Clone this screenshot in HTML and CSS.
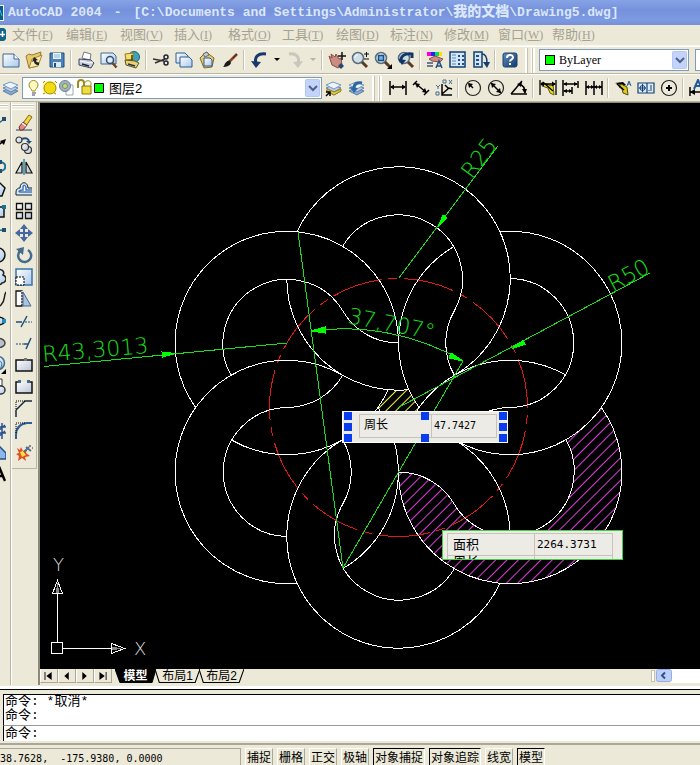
FILE: index.html
```html
<!DOCTYPE html>
<html lang="zh-CN">
<head>
<meta charset="utf-8">
<title>AutoCAD 2004 - Drawing5.dwg</title>
<link rel="stylesheet" href="styles.css">
</head>
<body>
<svg width="0" height="0" class="defs" aria-hidden="true">
  <defs>
    <linearGradient id="paper" x1="0" y1="0" x2="1" y2="1"><stop offset="0" stop-color="#ffffff"/><stop offset="1" stop-color="#a9c8ec"/></linearGradient>
    <linearGradient id="steel" x1="0" y1="0" x2="1" y2="1"><stop offset="0" stop-color="#ffffff"/><stop offset="1" stop-color="#b9c3d6"/></linearGradient>
    <linearGradient id="help" x1="0" y1="0" x2="1" y2="1"><stop offset="0" stop-color="#5f8fbe"/><stop offset="1" stop-color="#12386e"/></linearGradient>
    <g id="lens"><circle cx="7" cy="7" r="5.5" fill="#cfdfe8" stroke="#5a6d7c" stroke-width="1.5"/><path d="M3.8 7a3.3 3.3 0 0 1 3-3.2" fill="none" stroke="#fff"/><path d="M11 11l5 5" stroke="#5b3b24" stroke-width="3"/></g>
    <g id="stack"><path d="M1 12l7-3 8 3-7 4z" fill="#8aa9cc" stroke="#5d7fa8"/><path d="M1 9l7-3 8 3-7 4z" fill="#b9cfe6" stroke="#6486ae"/><path d="M1 6l7-3 8 3-7 4z" fill="#edf4fb" stroke="#7797bd"/></g>
    <g id="dims"><path d="M1 2v14M17 2v14M2 8h14" fill="none" stroke="#000" stroke-width="1.5"/><path d="M1 8l4-2.500v5zM17 8l-4-2.500v5z"/></g>
  </defs>
</svg>

<header class="title">
  <svg class="app-icon" width="4" height="16" viewBox="0 0 4 16"><path fill="#0d5c84" d="M0 0h3v16H0z"/><path stroke="#e9f8ff" d="M3.500 0v16M0 .5h4M0 15.500h4"/><path stroke="#31c1dd" d="M0 5l2 6"/></svg>
  <span>AutoCAD 2004</span><span>-</span><span>[C:\Documents and Settings\Administrator\<b class="cn">我的文档</b>\Drawing5.dwg]</span>
</header>

<nav class="menu">
  <svg class="doc-icon" width="6" height="16" viewBox="0 0 6 16"><path fill="#12658a" d="M0 1h4l2 2v9l-2 2H0z"/><path stroke="#fff" stroke-width="1.500" d="M0 7.500h5M2.500 4v6"/></svg>
  <a href="#">文件<i>(<u>F</u>)</i></a><a href="#">编辑<i>(<u>E</u>)</i></a><a href="#">视图<i>(<u>V</u>)</i></a><a href="#">插入<i>(<u>I</u>)</i></a><a href="#">格式<i>(<u>O</u>)</i></a><a href="#">工具<i>(<u>T</u>)</i></a><a href="#">绘图<i>(<u>D</u>)</i></a><a href="#">标注<i>(<u>N</u>)</i></a><a href="#">修改<i>(<u>M</u>)</i></a><a href="#">窗口<i>(<u>W</u>)</i></a><a href="#">帮助<i>(<u>H</u>)</i></a>
</nav>

<div class="bar">
  <button aria-label="新建"><svg viewBox="0 0 18 18"><path d="M1 3h11l5 5v8H1z" fill="url(#paper)" stroke="#3c6791"/><path d="M12 3v5h5" fill="#fff" stroke="#3c6791"/></svg></button>
  <button aria-label="打开"><svg viewBox="0 0 18 18"><path d="M1 5l3-2 3 1 9-3-3 14-9 2z" fill="#e8c96a" stroke="#9a7a2c"/><path d="M4 17l3-9 10-4-4 11z" fill="#f8ebb0" stroke="#a88732"/><path d="M14 14c-4 0-5-2-5-4l-2 1 2-5 4 3-2 .5c0 1 1 2 3 2z" fill="#222"/></svg></button>
  <button aria-label="保存"><svg viewBox="0 0 18 18"><path d="M2 2h14v14H2z" fill="#4d84b8" stroke="#1d4f80"/><path d="M5 2h8v6H5z" fill="#e9f3fb"/><path d="M6 4h6M6 6h6" stroke="#8fb2d2"/><path d="M5 11h8v5H5z" fill="#dce9f5"/><path d="M6 12h2v4H6z" fill="#1d4f80"/></svg></button>
  <span class="sep"></span>
  <button aria-label="打印"><svg viewBox="0 0 18 18"><path d="M5 7l2-6 7 2-1 6z" fill="#fff" stroke="#778"/><path d="M2 8l12 1 3 3-3 5-12-3z" fill="#c8d0de" stroke="#3a4560"/><path d="M3 10l10 2 3-1" fill="none" stroke="#fff"/><path d="M5 13l7 2" stroke="#223" stroke-width="1.500"/></svg></button>
  <button aria-label="预览"><svg viewBox="0 0 18 18"><path d="M1 2h12l3 3v8H1z" fill="url(#paper)" stroke="#47688c"/><circle cx="10" cy="9" r="3.500" fill="#dfeefa" stroke="#33506f" stroke-width="1.500"/><path d="M12.500 12l4 4.500" stroke="#6b4427" stroke-width="2.500"/></svg></button>
  <button aria-label="发布"><svg viewBox="0 0 18 18"><circle cx="11" cy="6" r="5.500" fill="#3da3bd" stroke="#1c6178"/><path d="M2 3l8-1 1 6-8 1z" fill="#f6e06a" stroke="#967a15"/><path d="M2 9l10 1 4 2-3 5-10-3z" fill="#e9d36a" stroke="#5d552e"/><path d="M5 13l7 2M9 4v5" stroke="#24344d" stroke-width="1.500"/></svg></button>
  <span class="sep"></span>
  <button aria-label="剪切"><svg viewBox="0 0 18 18"><path d="M1 8l11 2M3 12l10-4" stroke="#333" stroke-width="1.500"/><circle cx="14" cy="6" r="2" fill="none" stroke="#223" stroke-width="1.500"/><circle cx="14" cy="12" r="2" fill="none" stroke="#223" stroke-width="1.500"/></svg></button>
  <button aria-label="复制"><svg viewBox="0 0 18 18"><path d="M1 2h9l3 3v7H1z" fill="url(#paper)" stroke="#2c5d8f"/><path d="M5 6h9l3 3v7H5z" fill="url(#paper)" stroke="#2c5d8f"/></svg></button>
  <button aria-label="粘贴"><svg viewBox="0 0 18 18"><path d="M2 7l6-6 8 6-2 9-8 1z" fill="#e4c970" stroke="#86691e"/><path d="M5 3l4-2 2 3-4 2z" fill="#c9ccd4" stroke="#667"/><path d="M6 7h6l2 2v6H6z" fill="url(#paper)" stroke="#2c5d8f"/></svg></button>
  <button aria-label="特性匹配"><svg viewBox="0 0 18 18"><path d="M16 3l-8 8" stroke="#87401f" stroke-width="2.500"/><path d="M16 3l-4 4" stroke="#333"/><path d="M9 10c-2-1-5 1-6 5l-1 1c3 0 7-1 8-4z" fill="#1b1b1b"/></svg></button>
  <span class="sep"></span>
  <button aria-label="放弃"><svg viewBox="0 0 18 18"><path d="M6 12C4 6 8 2 16 3" fill="none" stroke="#17386a" stroke-width="3"/><path d="M1 10l10 1-5 6z" fill="#17386a"/></svg></button>
  <button class="drop" aria-label="放弃列表"><svg viewBox="0 0 9 18"><path d="M2 7h6l-3 3z"/></svg></button>
  <button aria-label="重做"><svg viewBox="0 0 18 18"><path d="M12 12C14 6 10 2 3 3" fill="none" stroke="#c9c7bc" stroke-width="3"/><path d="M17 10l-10 1 5 6z" fill="#c9c7bc"/></svg></button>
  <button class="drop" aria-label="重做列表"><svg viewBox="0 0 9 18"><path fill="#b5b2a3" d="M2 7h6l-3 3z"/></svg></button>
  <span class="sep"></span>
  <button aria-label="实时平移"><svg viewBox="0 0 18 18"><path d="M1 5l3 2-1-4 4 3 1-3 3 5 2-1 1 7-4 3-6-3z" fill="#c98b82" stroke="#8a4a45"/><path d="M10 15l3-3 3 3-3 3z" fill="#27466f"/><path d="M14 1v8M10 5h8" stroke="#111" stroke-width="1.500"/></svg></button>
  <button aria-label="实时缩放"><svg viewBox="0 0 18 18"><use href="#lens"/><path d="M13 3h5M15.500 1v5M13 8h5" stroke="#111"/></svg></button>
  <button aria-label="窗口缩放"><svg viewBox="0 0 18 18"><use href="#lens"/><path d="M4.500 4.500h5v5h-5z" fill="#7cb3df" stroke="#1c4f86" stroke-width="1.500"/><path d="M18 13v5h-5z"/></svg></button>
  <button aria-label="缩放上一个"><svg viewBox="0 0 18 18"><use href="#lens"/><path d="M4 11C3 5 8 2 15 3v4" fill="none" stroke="#123767" stroke-width="3"/><path d="M1 8l8 1-4 5z" fill="#123767"/></svg></button>
  <span class="sep"></span>
  <button aria-label="特性"><svg viewBox="0 0 18 18"><path fill="#f0c" d="M1 1h4v4H1z"/><path fill="#22f" d="M5 1h4v4H5z"/><path fill="#0d6" d="M9 1h4v4H9z"/><path fill="#fd0" d="M13 1h3v4h-3z"/><path d="M3 8l6-3 8 3-3 3-8-1z" fill="#cb8d86" stroke="#8a4a45"/><path d="M1 12h6M1 15h6" stroke="#457" stroke-width="1.500"/><path d="M10 17l3-7 3 7M11 15h4" fill="none" stroke="#234f80" stroke-width="1.500"/></svg></button>
  <button aria-label="设计中心"><svg viewBox="0 0 18 18"><path d="M1 1h15v15H1z" fill="#d6e8f7" stroke="#123e73" stroke-width="1.500"/><path d="M3 4h4M3 7h4M3 10h4M3 13h4" stroke="#5687b8"/><path d="M9 4h2v2H9zM13 4h2v2h-2zM9 8h2v2H9zM13 8h2v2h-2zM9 12h2v2H9zM13 12h2v2h-2z" fill="#1d4f88"/></svg></button>
  <button aria-label="工具选项板"><svg viewBox="0 0 18 18"><path d="M2 1h8v15H2z" fill="#d6e8f7" stroke="#123e73" stroke-width="1.500"/><path d="M4 4h3v2H4zM4 8h3v2H4zM4 12h3v2H4z" fill="#1d4f88"/><path d="M10 3c4 0 5 3 5 9" fill="none" stroke="#123e73" stroke-width="1.500"/><path d="M11 11l4 6 3-6z" fill="#123e73"/></svg></button>
  <span class="sep"></span>
  <button aria-label="帮助"><svg viewBox="0 0 18 18"><rect x="2" y="2" width="14" height="14" rx="2" fill="url(#help)" stroke="#17416f"/><path d="M6 7c0-4 6-4 6-.500 0 2-3 2-3 4M9 12v2" fill="none" stroke="#fff" stroke-width="2"/></svg></button>
  <span class="grip"></span>
  <label class="combo color"><span class="swatch"></span><select aria-label="颜色"><option>ByLayer</option></select><svg class="arrow" viewBox="0 0 15 18"><rect x=".5" y=".5" width="14" height="17" rx="1" fill="#c3d3fb" stroke="#b4c7f3"/><path d="M4 7l4 4 4-4" fill="none" stroke="#4d6185" stroke-width="2"/></svg></label>
  <span class="combo rest"></span>
</div>

<div class="bar">
  <button aria-label="图层特性"><svg viewBox="0 0 18 18"><use href="#stack"/></svg></button>
  <label class="combo layer">
    <svg class="state" width="76" height="18" viewBox="0 0 76 18"><path d="M4 12c0-2-3-3-3-6a4.500 4.500 0 0 1 9 0c0 3-3 4-3 6z" fill="#fffbc0" stroke="#a08a20"/><path d="M4 14h4M4 16h3" stroke="#445"/><path d="M15 2h13v13H15z" fill="#fff6a0"/><circle cx="22" cy="9" r="6" fill="#f2dc10" stroke="#9c8b19"/><path d="M17 2l-2 2M27 2l2 2M15 15l2-1M28 15l-2-1" stroke="#a58e12"/><path d="M38 6h7v10h-7z" fill="#fff" stroke="#9aa7b3"/><circle cx="37" cy="7" r="5.500" fill="#9fb4c0" stroke="#6c8593"/><circle cx="37" cy="7" r="2.500" fill="#c9d78a" stroke="#7b8d65"/><path d="M50 9V4c0-4 6-4 6 0v3" fill="none" stroke="#9b8d1d" stroke-width="2"/><path d="M54 7h9v8h-9z" fill="#f0dd3c" stroke="#867912"/><path d="M57 4c0-3 6-3 6 0v4" fill="none" stroke="#9b8d1d"/><path d="M66.500 4.500h9v9h-9z" fill="#0f0" stroke="#000"/></svg>
    <select aria-label="图层"><option>图层2</option></select><svg class="arrow" viewBox="0 0 15 18"><rect x=".5" y=".5" width="14" height="17" rx="1" fill="#c3d3fb" stroke="#b4c7f3"/><path d="M4 7l4 4 4-4" fill="none" stroke="#4d6185" stroke-width="2"/></svg></label>
  <button aria-label="置为当前"><svg viewBox="0 0 18 18"><use href="#stack"/><path d="M2 10l7 3 7-3v2l-7 4-7-4z" fill="#e6cb3f" stroke="#9c8420"/><path d="M1 17l3-3M1 13h4v4" fill="none" stroke="#000" stroke-width="1.500"/></svg></button>
  <button aria-label="上一个图层"><svg viewBox="0 0 18 18"><use href="#stack"/><path d="M6 9c0-4 3-6 8-5" fill="none" stroke="#2b67a5" stroke-width="3"/><path d="M2 8l8 1-4 5z" fill="#2b67a5"/></svg></button>
  <span class="grip"></span>
  <button aria-label="线性标注"><svg viewBox="0 0 18 18"><use href="#dims"/></svg></button>
  <button aria-label="对齐标注"><svg viewBox="0 0 18 18"><path d="M1 6l4-4M12 16l5-5M3 4l12 10" stroke="#000" stroke-width="1.500"/><path d="M3 4l5 1-3 4zM15 14l-5-1 3-4z"/></svg></button>
  <button aria-label="坐标标注"><svg viewBox="0 0 18 18"><path d="M7 5v11h10M7 15l7-6 3 1M10 6l3 3" fill="none" stroke="#000" stroke-width="1.500"/><path d="M1 6l2 2 2-2M3 8v2M8 1h3v3H8zM14 1l3 4M17 1l-3 4M1 13h3v3H1z" fill="none" stroke="#476d8c"/></svg></button>
  <span class="sep"></span>
  <button aria-label="半径标注"><svg viewBox="0 0 18 18"><circle cx="9" cy="9" r="7.500" fill="none" stroke="#222" stroke-width="1.200"/><path d="M9 9L5 5" stroke="#000" stroke-width="1.500"/><path d="M4 4l5 1-4 4z"/></svg></button>
  <button aria-label="直径标注"><svg viewBox="0 0 18 18"><circle cx="9" cy="9" r="7.500" fill="none" stroke="#222" stroke-width="1.200"/><path d="M4 4l10 10" stroke="#000" stroke-width="1.500"/><path d="M4 4l5 1-4 4zM14 14l-5-1 4-4z"/></svg></button>
  <button aria-label="角度标注"><svg viewBox="0 0 18 18"><path d="M1 15h16M1 15L12 2M9 5c4 1 6 4 6 9" fill="none" stroke="#000" stroke-width="1.500"/><path d="M7 5l5-2-1 5zM12 10h5l-2 5z"/></svg></button>
  <span class="sep"></span>
  <button aria-label="快速标注"><svg viewBox="0 0 18 18"><path d="M3 3l9 4 2-2 1 11-4-2-2-5-6-2z" fill="#eadb1e" stroke="#605b12"/><path d="M1 1v15M17 1v15M2 5h14M5 4l9 8" stroke="#000" stroke-width="1.300"/><path d="M1 5l4-2.500v5zM17 5l-4-2.500v5z"/></svg></button>
  <button aria-label="基线标注"><svg viewBox="0 0 18 18"><path d="M1 1v16M10 8v7M16 2v7M2 5h13M2 12h8" stroke="#000" stroke-width="1.500"/><path d="M1 5l4-2v4zM16 5l-4-2v4zM1 12l4-2v4zM10 12l-3-2v4z"/></svg></button>
  <button aria-label="连续标注"><svg viewBox="0 0 18 18"><path d="M1 2v14M9 2v14M17 2v14M1 8h16" stroke="#000" stroke-width="1.500"/><path d="M1 8l3-2v4zM9 8L6 6v4zM9 8l3-2v4zM17 8l-3-2v4z"/></svg></button>
  <span class="sep"></span>
  <button aria-label="快速引线"><svg viewBox="0 0 18 18"><path d="M1 4l8-1 3 3-3 1z"/><path d="M7 5l6 3 1 8-5-2-1-4-3-2z" fill="#ddc91c" stroke="#504b12"/><path d="M3 5l7 6" stroke="#000" stroke-width="1.500"/><path d="M13 7l2-5 2 5M14 5h2" fill="none" stroke="#215c91"/></svg></button>
  <button aria-label="公差"><svg viewBox="0 0 18 18"><path d="M1 4h16v10H1zM10 4v10" fill="#dcebf8" stroke="#183f75" stroke-width="1.200"/><circle cx="5.500" cy="9" r="2.500" fill="none" stroke="#183f75"/><path d="M2 9h7M5.500 5v8M12 12v-1M14 6v6" stroke="#183f75"/></svg></button>
  <button aria-label="圆心标记"><svg viewBox="0 0 18 18"><circle cx="9" cy="9" r="7.500" fill="none" stroke="#222" stroke-width="1.200"/><path d="M9 6v6M6 9h6" stroke="#000" stroke-width="2"/></svg></button>
  <span class="sep"></span>
  <button aria-label="编辑标注"><svg viewBox="0 0 18 18"><path d="M1 8v9M1 13h16" stroke="#000" stroke-width="1.500"/><path d="M1 13l5-3v6z"/><path d="M5 10L9 1l4 9M6 7h6" fill="none" stroke="#205a98" stroke-width="2"/></svg></button>
</div>

<main>
  <aside class="tools draw" aria-label="绘图">
    <span class="hgrip"></span>
    <button aria-label="直线"><svg viewBox="0 0 18 18"><path d="M2 15L15 6" stroke="#1b6f95" stroke-width="1.500"/><path d="M14 3h4v4h-4z" fill="#1d4f73"/></svg></button>
    <button aria-label="构造线"><svg viewBox="0 0 18 18"><path d="M3 14L16 5" stroke="#000" stroke-width="1.500"/><path d="M18 3l-2 6-4-4z"/></svg></button>
    <button aria-label="多段线"><svg viewBox="0 0 18 18"><path d="M4 4h8c7 0 7 9 0 9" fill="none" stroke="#1b6f95" stroke-width="2"/><path d="M10 2h4v4h-4zM10 11h4v4h-4z" fill="#1d4f73"/></svg></button>
    <button aria-label="正多边形"><svg viewBox="0 0 18 18"><path d="M4 6l8-3 5 5-3 8H4z" fill="url(#paper)" stroke="#111" stroke-width="1.500"/></svg></button>
    <button aria-label="矩形"><svg viewBox="0 0 18 18"><path d="M2 5h14v10H2z" fill="url(#paper)" stroke="#111" stroke-width="1.500"/><path d="M14 3h4v4h-4z" fill="#1b6f95"/></svg></button>
    <button aria-label="圆弧"><svg viewBox="0 0 18 18"><path d="M2 12c3-5 8-6 14-6" fill="none" stroke="#1b6f95" stroke-width="1.500"/><path d="M14 4h4v4h-4z" fill="#1d4f73"/></svg></button>
    <button aria-label="圆"><svg viewBox="0 0 18 18"><circle cx="10" cy="9" r="7" fill="url(#paper)" stroke="#111" stroke-width="1.500"/></svg></button>
    <button aria-label="修订云线"><svg viewBox="0 0 18 18"><path d="M9 2c5-2 8 2 6 5 5 2 3 8-1 8-2 3-8 2-9-1z" fill="url(#paper)" stroke="#222" stroke-width="1.500"/></svg></button>
    <button aria-label="样条曲线"><svg viewBox="0 0 18 18"><path d="M3 12c5-8 5 8 10 3s2-8 5-13" fill="none" stroke="#222" stroke-width="1.500"/></svg></button>
    <button aria-label="椭圆"><svg viewBox="0 0 18 18"><ellipse cx="9" cy="9" rx="8" ry="4" fill="url(#paper)" stroke="#111" stroke-width="1.500"/><path d="M14 7h4v4h-4z" fill="#1b8fbf"/></svg></button>
    <button aria-label="椭圆弧"><svg viewBox="0 0 18 18"><ellipse cx="11" cy="9" rx="6" ry="4.500" fill="#b8c1cc" stroke="#444" stroke-width="1.500"/></svg></button>
    <button aria-label="插入块"><svg viewBox="0 0 18 18"><circle cx="10" cy="7" r="6.500" fill="url(#paper)" stroke="#3b6d8b" stroke-width="1.500"/><path d="M10 4c4 1 5 5 2 9" fill="none" stroke="#3b6d8b"/><path d="M18 13v5h-5z"/></svg></button>
    <button aria-label="创建块"><svg viewBox="0 0 18 18"><path d="M10 1h4v7h-4z" fill="#fff" stroke="#333"/><circle cx="13" cy="12" r="4" fill="url(#paper)" stroke="#333" stroke-width="1.500"/></svg></button>
    <button aria-label="点"><svg viewBox="0 0 18 18"><circle cx="8" cy="9" r="1"/></svg></button>
    <button aria-label="图案填充"><svg viewBox="0 0 18 18"><path d="M14 1v16M10 2v14M6 5h12M6 11h12M9 10l8-7M9 16l8-7" stroke="#244f93" stroke-width="1.500"/></svg></button>
    <button aria-label="面域"><svg viewBox="0 0 18 18"><path d="M4 7l8-4 6 6v6H4z" fill="#8fb6e8" stroke="#23518a" stroke-width="1.500"/></svg></button>
    <button aria-label="多行文字"><svg viewBox="0 0 18 18"><path d="M6 15L12 3l5 12M9 10h6" fill="none" stroke="#000" stroke-width="2.500"/></svg></button>
  </aside>
  <aside class="tools modify" aria-label="修改">
    <div class="palette">
    <span class="hgrip"></span>
    <button aria-label="删除"><svg viewBox="0 0 18 18"><path d="M1 16h16" stroke="#223a60"/><path d="M8 9l6-8 3 2-6 9z" fill="#f2d83a" stroke="#7b6918"/><path d="M4 13l4-5 4 3-4 5H5z" fill="#dd8e86" stroke="#73302c"/><path d="M7 9l4 3" stroke="#eee" stroke-width="1.500"/></svg></button>
    <button aria-label="复制对象"><svg viewBox="0 0 18 18"><g fill="url(#steel)" stroke="#333" stroke-width="1.200"><circle cx="4" cy="4" r="3"/><circle cx="13" cy="14" r="3.500"/><circle cx="10" cy="11" r="3.500"/></g><path d="M7 3c4-2 7 0 7 3" fill="none" stroke="#205078" stroke-width="2"/><path d="M11 5h6l-3 3z" fill="#205078"/></svg></button>
    <button aria-label="镜像"><svg viewBox="0 0 18 18"><path d="M9 1v16" stroke="#2888b5" stroke-width="1.500"/><path d="M7 4v11H1zM11 4v11h6z" fill="url(#steel)" stroke="#111" stroke-width="1.200"/></svg></button>
    <button aria-label="偏移"><svg viewBox="0 0 18 18"><path d="M17 15H1v-3c0-3 2-4 4-4 0-7 8-7 8 0h4" fill="#dce9f5" stroke="#123"/><path d="M17 12H5c-2 0-1-2 3-2V8c0-4 3-3 3 0v2h6" fill="#fff" stroke="#4378b5" stroke-width="1.500"/></svg></button>
    <button aria-label="阵列"><svg viewBox="0 0 18 18"><g fill="url(#steel)" stroke="#111" stroke-width="1.300"><path d="M1.500 1.500h6v6h-6zM10.500 1.500h6v6h-6zM1.500 10.500h6v6h-6zM10.500 10.500h6v6h-6z"/></g></svg></button>
    <button aria-label="移动"><svg viewBox="0 0 18 18"><path d="M9 3v12M3 9h12" stroke="#4668a0" stroke-width="2"/><path d="M9 0l4 5H5zM9 18l-4-5h8zM0 9l5-4v8zM18 9l-5 4V5z" fill="#4668a0"/></svg></button>
    <button aria-label="旋转"><svg viewBox="0 0 18 18"><path d="M5 5a6.500 6.500 0 1 0 8-1" fill="none" stroke="#456b8c" stroke-width="2.500"/><path d="M1 3l8-2-1 8z" fill="#456b8c"/></svg></button>
    <button aria-label="缩放"><svg viewBox="0 0 18 18"><path d="M1 1h16v16H1z" fill="url(#paper)" stroke="#3a73ac" stroke-width="1.500"/><path d="M1 9h8v8H1z" fill="#fff" stroke="#000" stroke-dasharray="2 1"/></svg></button>
    <button aria-label="拉伸"><svg viewBox="0 0 18 18"><path d="M7 1v15H1V1z" fill="#fff" stroke="#111" stroke-width="1.300"/><path d="M7 1v15" stroke="#fff" stroke-width="1.500" stroke-dasharray="1 2"/><path d="M8 2l8 14H8z" fill="#a9c4e3" stroke="#47688d"/></svg></button>
    <button aria-label="修剪"><svg viewBox="0 0 18 18"><path d="M1 10h6M12 4L6 15" stroke="#205078" stroke-width="1.500"/><path d="M10 10h7" stroke="#205078" stroke-dasharray="2 1"/></svg></button>
    <button aria-label="延伸"><svg viewBox="0 0 18 18"><path d="M1 10h9" stroke="#205078" stroke-dasharray="2 1"/><path d="M9 10h4M16 4l-5 11" stroke="#205078" stroke-width="1.500"/></svg></button>
    <button aria-label="打断于点"><svg viewBox="0 0 18 18"><path d="M1 4h16v11H1z" fill="url(#steel)" stroke="#111" stroke-width="1.500"/><path d="M9 2h3v3H9z" fill="#777"/></svg></button>
    <button aria-label="打断"><svg viewBox="0 0 18 18"><path d="M4 4H1v11h16V4h-3" fill="url(#steel)" stroke="#111" stroke-width="1.500"/><path d="M3 2h3v3H3zM12 2h3v3h-3z" fill="#456b8c"/></svg></button>
    <button aria-label="倒角"><svg viewBox="0 0 18 18"><path d="M1 17v-7M10 1h7M1 10l9-9" fill="none" stroke="#1a2a3c" stroke-width="1.500"/><path d="M1 9V1h9" fill="none" stroke="#000" stroke-dasharray="1 1"/></svg></button>
    <button aria-label="圆角"><svg viewBox="0 0 18 18"><path d="M1 17v-4C1 5 5 2 12 1h5" fill="none" stroke="#315f93" stroke-width="2"/><path d="M1 11V1h10" fill="none" stroke="#000" stroke-dasharray="1 1"/></svg></button>
    <button aria-label="分解"><svg viewBox="0 0 18 18"><path d="M2 4l3 2 1-3 2 4 4-2-1 4 4 3-5 1 1 4-4-3-4 3 1-5-3-2 3-1z" fill="#e44b1d"/><path d="M5 8l3-1 3 4-4 2z" fill="#ffe24a"/><path d="M9 8l5-5M11 3l5 4" stroke="#52718d" stroke-width="2"/><path d="M15 1v2M17 4h1" stroke="#223"/></svg></button>
    </div>
  </aside>

  <section class="work">
    <div class="canvas">
      <svg class="drawing" width="660" height="564" viewBox="40 103 660 564">
        <defs>
          <pattern id="violet" width="8" height="8" patternUnits="userSpaceOnUse" patternTransform="rotate(-45)"><path d="M0 .5h8" stroke="#e03ce0"/></pattern>
          <pattern id="yellow" width="7" height="7" patternUnits="userSpaceOnUse" patternTransform="rotate(-45)"><path d="M0 .5h7" stroke="#f4f43c"/></pattern>
          <g id="petal">
            <path d="M202.900 0A111.700 111.700 0 1 1 0 64.500A64.500 64.500 0 0 1 55.850 96.750A64.500 64.500 0 0 0 167.550 32.250"/>
            <path d="M167.550-32.250A111.700 111.700 0 0 0 10.300 17.800"/>
          </g>
        </defs>
        <g transform="translate(398.500 407.500)">
          <path fill="url(#violet)" d="M202.900 0A111.700 111.700 0 1 1 0 64.500A64.500 64.500 0 0 1 55.850 96.750A64.500 64.500 0 0 0 167.550 32.250A111.700 111.700 0 0 0 202.900 0z"/>
          <path fill="url(#yellow)" d="M-10-17.500h20L20 0 10 17.500h-20L-20 0z"/>
          <circle class="axis" r="129"/>
          <g class="outline">
            <use href="#petal"/><use href="#petal" transform="rotate(60)"/><use href="#petal" transform="rotate(120)"/><use href="#petal" transform="rotate(180)"/><use href="#petal" transform="rotate(240)"/><use href="#petal" transform="rotate(300)"/>
          </g>
        </g>
        <g class="dim">
          <path d="M44 366.500L287 343M398.500 278.500L498 146M398.500 407.500L650 273M298 232L343 568L463 361M311 331A239 239 0 0 1 463 361"/>
          <path class="head" d="M176 353.500l-14-1.500.500 5zM438 227l5-12 4 3zM512 348.500l11-8 2 4zM311 331l14-4v6zM463 361l-14-3 2-5z"/>
        </g>
        <g class="dim-text">
          <text transform="translate(43 362) rotate(-5)">R43,3013</text>
          <text transform="translate(472 180) rotate(-53)">R25</text>
          <text transform="translate(613 292) rotate(-28)">R50</text>
          <text transform="translate(347 323) rotate(11)">37,707°</text>
        </g>
        <g class="ucs">
          <path d="M51.500 642.500h11v11h-11zM57.500 642V593M63 648.500h48M52.500 593.500h10l-5-13zM111.500 643.500v10l13-5z"/>
          <path class="shade" d="M55.500 593l2-10 2 10zM112 646.500l9 2-9 2z"/>
          <text x="53" y="571">Y</text><text x="134" y="655">X</text>
        </g>
      </svg>
      <div class="tip perimeter"><div class="row"><span>周长</span><output>47.7427</output></div>
        <i class="h tl"></i><i class="h ml"></i><i class="h bl"></i><i class="h tc"></i><i class="h bc"></i><i class="h tr"></i><i class="h mr"></i><i class="h br"></i>
      </div>
      <div class="tip area"><div class="row"><span>面积</span><output>2264.3731</output></div><div class="row next"><span>周长</span><output></output></div></div>
    </div>
    <div class="tabs">
      <button class="nav" aria-label="第一个"><svg viewBox="0 0 18 14"><path d="M4 3h1v9H4zM12 3v9L6 7.500z"/></svg></button><button class="nav" aria-label="上一个"><svg viewBox="0 0 18 14"><path d="M11 3v9L6 7.500z"/></svg></button><button class="nav" aria-label="下一个"><svg viewBox="0 0 18 14"><path d="M6 3v9l5-4.500z"/></svg></button><button class="nav" aria-label="最后一个"><svg viewBox="0 0 18 14"><path d="M12 3h1v9h-1zM5 3v9l6-4.500z"/></svg></button>
      <button class="tab on"><svg preserveAspectRatio="none" viewBox="0 0 42 14"><path d="M0 0h42l-4 13.500H5z"/></svg><span>模型</span></button>
      <button class="tab"><svg preserveAspectRatio="none" viewBox="0 0 42 14"><path d="M0 0l4 13.500h33.500L42 0"/></svg><span>布局1</span></button>
      <button class="tab"><svg preserveAspectRatio="none" viewBox="0 0 42 14"><path d="M0 0l4 13.500h33.500L42 0"/></svg><span>布局2</span></button>
      <div class="scroll"><i></i><button aria-label="向左滚动"><svg viewBox="0 0 16 14"><rect x=".5" y=".5" width="15" height="12" rx="2" fill="#bccffa" stroke="#93aee4"/><path d="M9 3.500L6 6.500l3 3" fill="none" stroke="#31508f" stroke-width="2"/></svg></button></div>
    </div>
  </section>
</main>

<section class="command">
  <div class="log"><p>命令: *取消*</p><p>命令:</p></div>
  <label class="prompt">命令:<input type="text" aria-label="命令"></label>
</section>

<footer class="status">
  <span class="coords">38.7628,&nbsp; -175.9380, 0.0000</span>
  <button>捕捉</button><button>栅格</button><button>正交</button><button>极轴</button><button class="on">对象捕捉</button><button class="on">对象追踪</button><button>线宽</button><button class="on">模型</button>
</footer>
</body>
</html>
```
FILE: styles.css
```css
* { box-sizing: border-box; }

body {
  margin: 0;
  min-height: 100vh;
  display: flex;
  flex-direction: column;
  overflow: hidden;
  background: #ece9d8;
  color: #000;
  font: 12px/16px "Liberation Sans", "Noto Sans CJK SC", sans-serif;
}

.defs { position: absolute; }

button {
  margin: 0;
  padding: 0;
  border: 0;
  background: none;
  color: inherit;
  font: inherit;
  white-space: nowrap;
}

/* title and menu */
.title {
  display: flex;
  align-items: center;
  gap: 12px;
  height: 25px;
  flex: none;
  overflow: hidden;
  background: linear-gradient(#86a3e6, #7691dc 40%, #7d9ae2 80%, #7590d6);
  color: #dbe7fb;
  font: bold 13px/24px "Liberation Mono", "Noto Sans CJK SC", monospace;
  white-space: nowrap;
}
.title .app-icon { margin-right: -8px; }
.title .cn { font-size: 14px; }

.menu {
  display: flex;
  align-items: center;
  height: 21px;
  flex: none;
  overflow: hidden;
  border-bottom: 1px solid #f8f7f0;
}
.doc-icon { margin-right: 6px; }
.menu a {
  width: 54px;
  flex: none;
  color: #a5a192;
  font-size: 13px;
  text-decoration: none;
  white-space: nowrap;
}
.menu i { font: 12px/16px "Liberation Serif", serif; }

/* horizontal toolbars */
.bar {
  display: flex;
  align-items: center;
  height: 28px;
  flex: none;
  overflow: hidden;
  border-top: 1px solid #fff;
  border-bottom: 1px solid #b9b6a5;
}
.bar > button { width: 23px; flex: none; }
.bar > button:first-child { margin-left: -1px; }
.bar > button svg { display: block; width: 18px; height: 18px; margin: 0 auto; }
.bar > .drop { width: 13px; }
.bar > .drop svg { width: 9px; }
.sep { width: 2px; height: 20px; margin: 0 2px; flex: none; border-left: 1px solid #c5c2b0; border-right: 1px solid #fff; }
.grip {
  width: 10px;
  height: 25px;
  margin: 0 4px;
  flex: none;
  border: solid #fff;
  border-width: 0 2px;
  background: linear-gradient(90deg, #c5c2b0 1px, #ece9d8 1px 4px, #fff 4px 5px, #c5c2b0 5px);
  background-size: 6px 100%;
}
.combo {
  display: flex;
  align-items: center;
  height: 22px;
  flex: none;
  border: 1px solid #7f9db9;
  background: #fff;
}
.combo select {
  flex: 1;
  min-width: 0;
  height: 18px;
  padding: 0;
  border: 0;
  appearance: none;
  background: none;
  color: #000;
}
.combo .arrow { width: 15px; height: 18px; flex: none; margin-right: 1px; }
.color { width: 150px; }
.color select { font: 12px "Liberation Serif", serif; }
.swatch { width: 10px; height: 10px; margin: 0 4px 0 5px; border: 1px solid #000; background: #0f0; }
.rest { width: 40px; margin-left: 6px; }
.layer { width: 300px; }
.layer select { font: 13px "Liberation Sans", "Noto Sans CJK SC", sans-serif; }
.state { margin: 0 5px; flex: none; }

/* workspace */
main { display: flex; flex: 1; }
.tools { display: flex; flex-direction: column; flex: none; overflow: hidden; }
.tools button { height: 22px; flex: none; }
.tools svg { display: block; width: 18px; height: 18px; margin: 2px auto; }
.hgrip { height: 6px; margin: 2px 2px 2px 0; flex: none; border: solid #fff; border-width: 1px 0; background: linear-gradient(#c5c2b0 1px, #fff 1px 2px, #ece9d8 2px); }
.draw { width: 11px; border-right: 1px solid #b9b6a5; }
.draw button { width: 20px; margin-left: -13px; }
.modify { width: 29px; border-left: 1px solid #fff; border-right: 2px solid #8d8a7b; }
.palette { display: flex; flex-direction: column; width: 25px; padding-bottom: 4px; border-right: 1px solid #b9b6a5; border-bottom: 1px solid #b9b6a5; }
.work { display: flex; flex: 1; flex-direction: column; min-width: 0; border-top: 1px solid #8d8a7b; }
.canvas { position: relative; flex: 1; overflow: hidden; background: #000; }
.drawing { display: block; }

.outline, .axis, .dim path, .ucs path { fill: none; stroke: #fff; shape-rendering: crispEdges; }
.drawing .axis { stroke: #e01818; stroke-dasharray: 51 7 9 6.7; stroke-dashoffset: 50; }
.drawing .dim path { stroke: #18e018; }
.drawing .dim .head { fill: #0f0; stroke: #0f0; }
.dim-text { fill: #18e018; font: 200 22px "DejaVu Sans", sans-serif; }
.ucs text { fill: #ddd; font: 200 18px "DejaVu Sans", sans-serif; }
.drawing .ucs .shade { fill: #888; stroke: none; }

/* measurement read-outs lying over the drawing */
.tip { position: absolute; overflow: hidden; background: #ecebe6; }
.tip .row { display: flex; border: 1px solid #c6c4b9; }
.tip output { border-left: 1px solid #c6c4b9; padding-left: 2px; font: 10px/22px "DejaVu Sans Mono", monospace; }
.perimeter { left: 302px; top: 308px; width: 166px; height: 32px; padding: 2px 10px 4px 16px; border: 1px solid #fff; }
.perimeter .row { height: 24px; }
.perimeter span { width: 71px; padding-left: 4px; font-size: 12px; line-height: 20px; }
.area { left: 402px; top: 427px; width: 181px; height: 30px; padding: 2px 9px 0 4px; border: 1px solid #3fd03f; }
.area .row { height: 23px; margin-bottom: -1px; }
.area span { width: 86px; padding-left: 5px; font-size: 13px; line-height: 21px; }
.area output { font-size: 11px; }
.area .next span { line-height: 11px; }
.h { position: absolute; width: 8px; height: 8px; background: #0a3cf0; }
.tl, .ml, .bl { left: 1px; }
.tc, .bc { left: 78px; }
.tr, .mr, .br { right: 0; }
.tl, .tc, .tr { top: 0; }
.ml, .mr { top: 11px; }
.bl, .bc, .br { bottom: 0; }

.tabs { display: flex; height: 16px; flex: none; border-bottom: 2px solid #ece9d8; }
.nav { width: 18px; flex: none; border-right: 1px solid #aca899; border-bottom: 1px solid #aca899; border-left: 1px solid #fff; }
.nav svg { display: block; width: 16px; height: 13px; }
.tab { position: relative; flex: none; width: 45px; margin-right: -1px; font-size: 12px; line-height: 13px; }
.tab.on { width: 41px; margin-left: 3px; color: #fff; font-weight: bold; }
.tab svg { position: absolute; left: 0; top: 0; width: 100%; height: 14px; fill: none; stroke: #000; }
.tab.on svg { fill: #000; }
.tab span { position: relative; }
.scroll { display: flex; width: 50px; margin-left: auto; background: linear-gradient(90deg, #ece9d8 20px, #fff 20px); }
.scroll i { width: 4px; margin: 1px 1px 1px 1px; border: 1px solid #c5c2b0; background: #fff; }
.scroll button, .scroll svg { display: block; width: 16px; height: 14px; }

/* command window */
.command {
  flex: none;
  margin-top: 4px;
  padding: 4px 0 2px 3px;
  border-top: 1px solid #000;
  box-shadow: 0 -3px 0 #fff;
  font: 13px/14px "Liberation Mono", "Noto Sans CJK SC", monospace;
}
.log { padding: 0 0 2px 1px; border: solid #000; border-width: 1px 0 0 1px; background: #fff; }
.log p { margin: 0; }
.prompt { display: flex; align-items: center; height: 16px; padding-left: 1px; border-top: 1px solid #999; border-left: 1px solid #000; background: #fff; }
.prompt input { flex: 1; min-width: 0; height: 14px; border: 0; padding: 0 4px; outline: 0; background: none; font: inherit; }

/* status bar */
.status { display: flex; flex: none; gap: 4px; height: 22px; padding-top: 3px; border-top: 2px solid #aca899; overflow: hidden; }
.coords { width: 241px; flex: none; border: solid #aca899; border-width: 1px 1px 0 0; font: 10px/20px "DejaVu Sans Mono", monospace; }
.status button { flex: none; height: 20px; padding: 0 1px; border: 1px solid; border-color: #fff #aca899 #aca899 #fff; }
.status button.on { border-color: #000 #fff #fff #000; }
```
